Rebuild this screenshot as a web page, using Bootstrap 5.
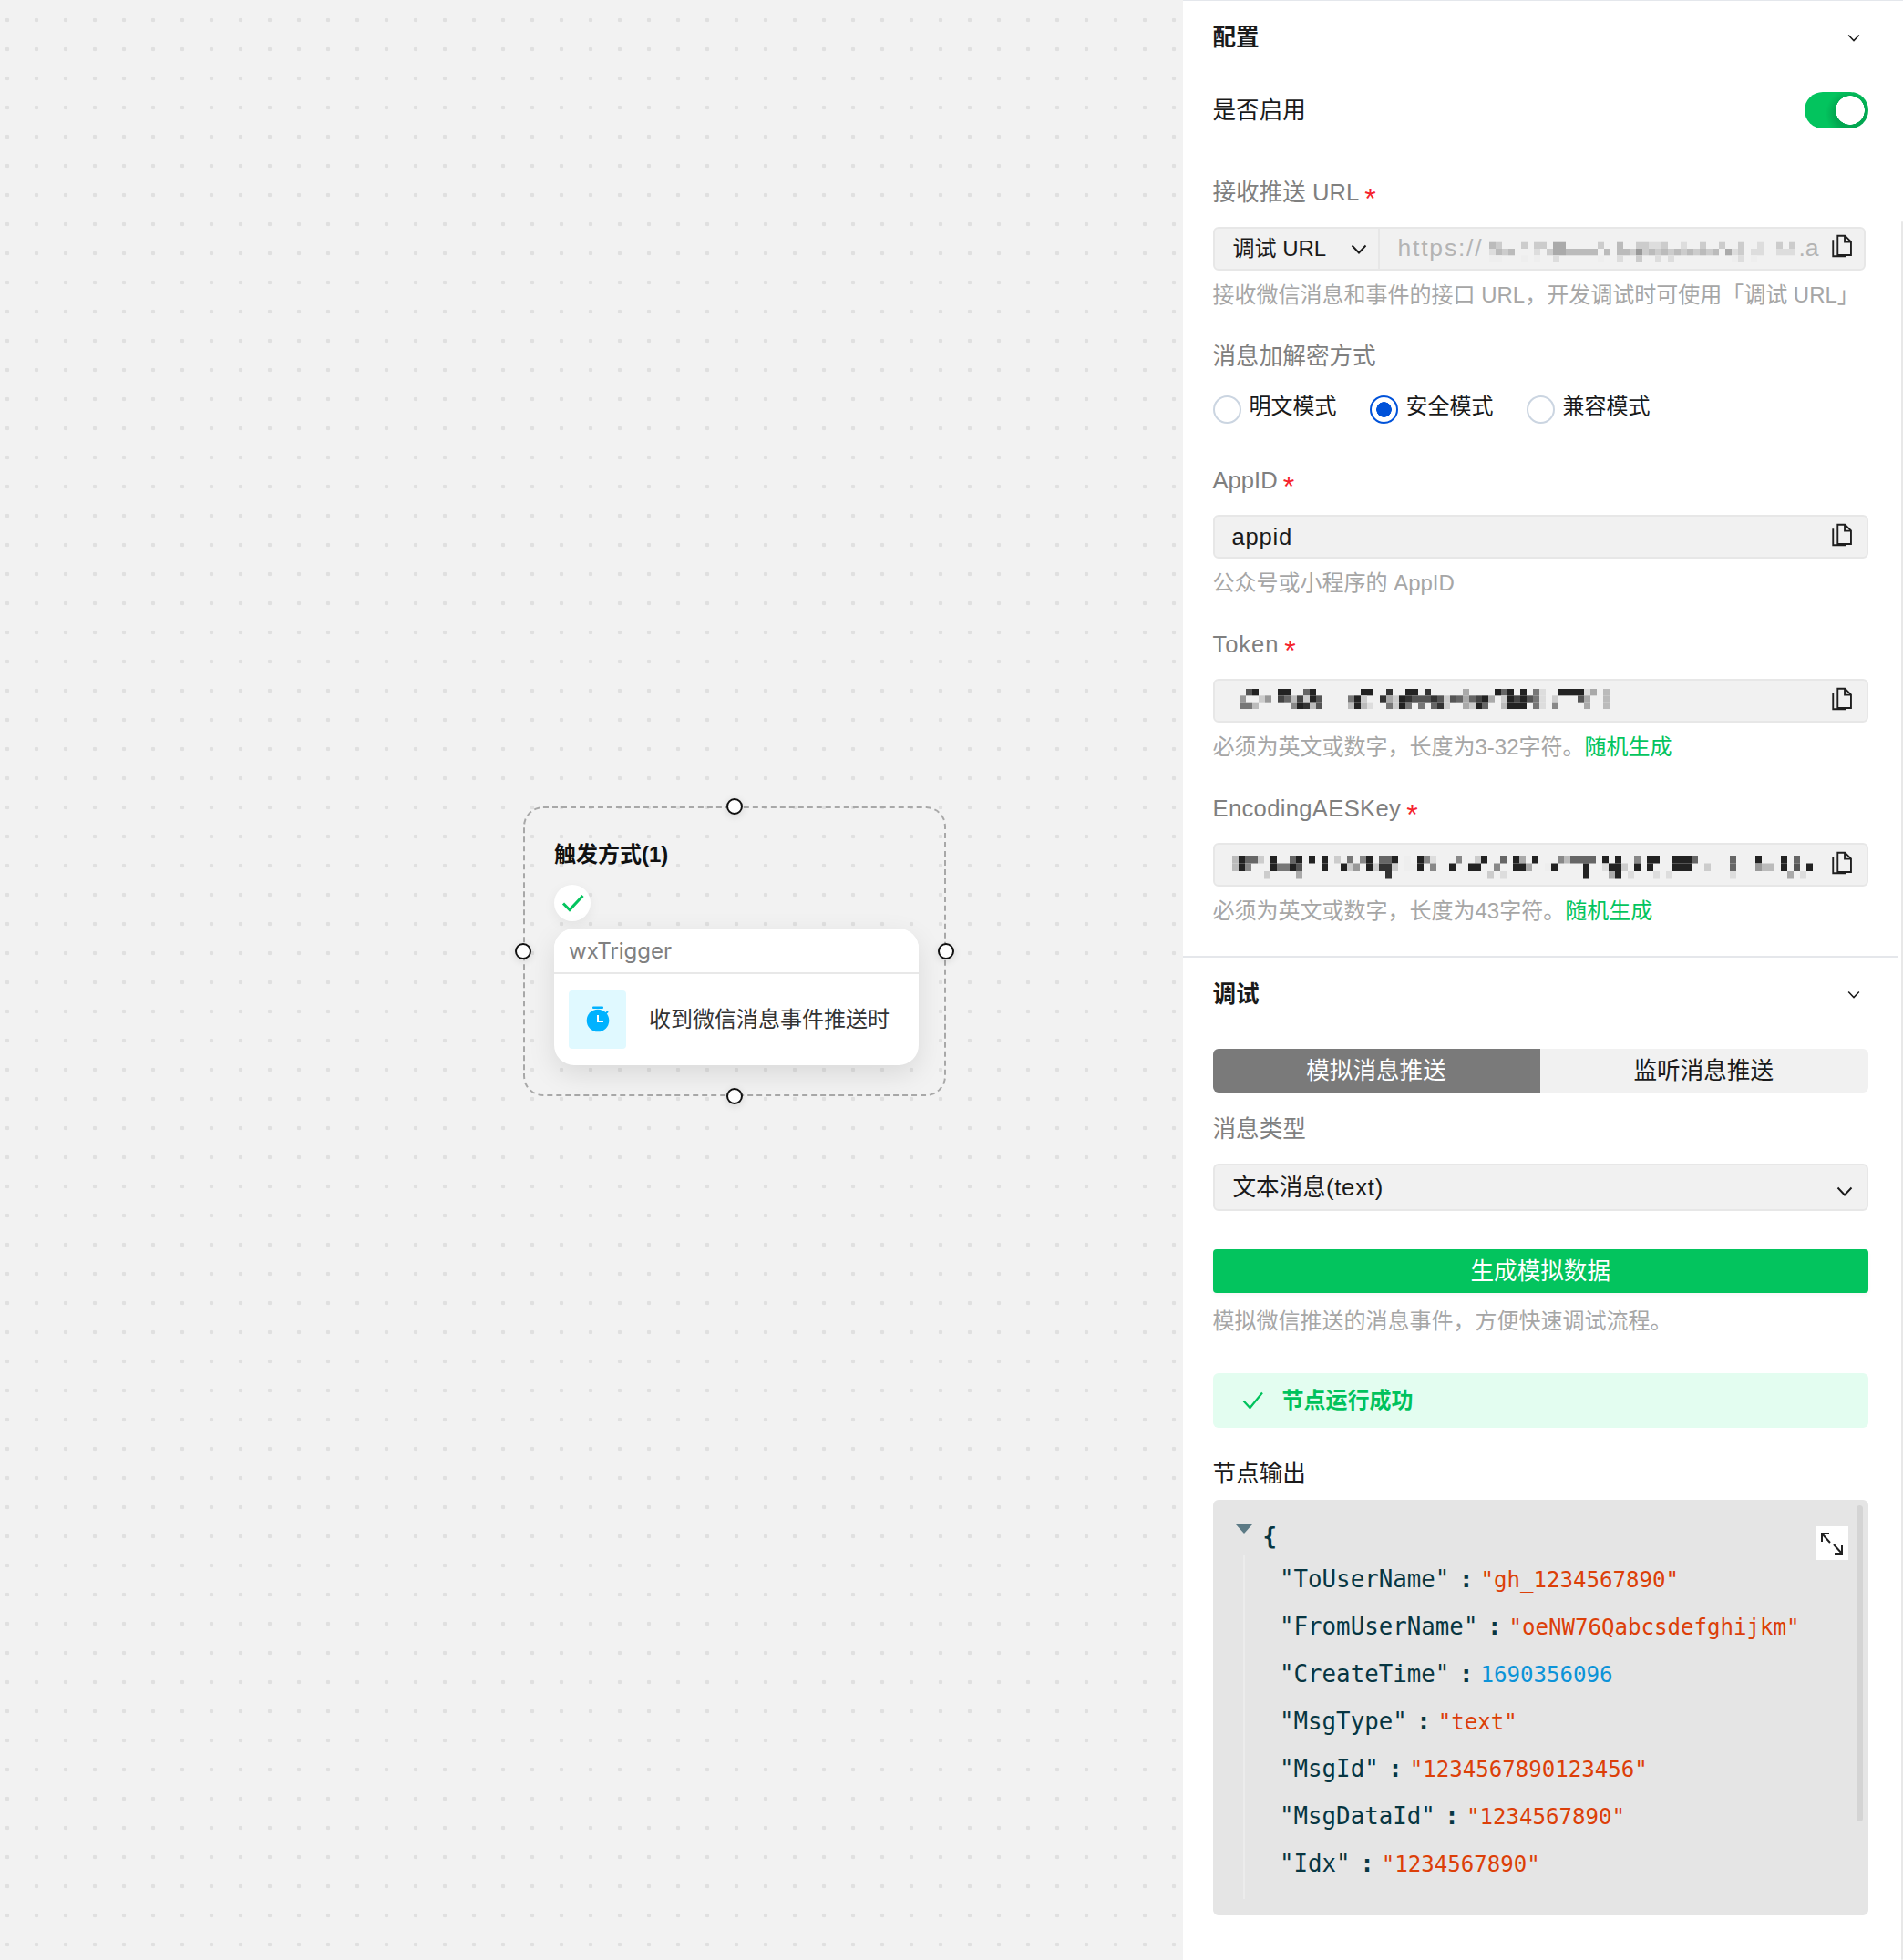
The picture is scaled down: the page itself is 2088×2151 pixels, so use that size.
<!doctype html>
<html lang="zh-CN">
<head>
<meta charset="utf-8">
<title>wxTrigger</title>
<link href="https://cdn.jsdelivr.net/npm/bootstrap@5.3.0/dist/css/bootstrap.min.css" rel="stylesheet">
<style>
html,body{margin:0;height:2151px;overflow:hidden}
body{font-family:"Liberation Sans","Noto Sans CJK SC",sans-serif;font-size:25.6px;color:#1a1a1a;background:#fff}
.stage{width:2088px;height:2151px}
.canvas-area{position:relative;width:1298px;height:2151px;flex:none;background-color:#f2f2f2;background-image:radial-gradient(circle at center,#e0e0e0 2px,transparent 2.6px);background-size:32px 32px;background-position:-8px 6px}
.node-box{position:absolute;left:574px;top:885px;width:464px;height:318px;border:2px dashed #a8a8a8;border-radius:22px;padding:36px 0 0 32px}
.node-title{font-size:24px;line-height:30px;font-weight:700;color:#111}
.node-check{width:40px;height:40px;margin-top:18px;border-radius:50%;background:#fff;box-shadow:0 4px 14px rgba(0,0,0,.06)}
.node-card{width:400px;height:150px;margin-top:8px;border:0;border-radius:22px;box-shadow:0 10px 30px rgba(0,0,0,.1)}
.node-card .card-header{height:50px;padding:0 16px;background:#fff;border-bottom:2px solid #e8e8e8;border-radius:22px 22px 0 0;font-family:Inter,"Noto Sans CJK SC",sans-serif;font-size:24px;line-height:49px;color:#808080}
.node-card .card-body{padding:18px 16px}
.node-icon{width:63px;height:64px;border-radius:4px;background:#e0f9ff}
.node-text{margin-left:25px;font-size:24px;color:#333;line-height:60px}
.handle{position:absolute;width:18px;height:18px;background:#fff;border:2.5px solid #111;border-radius:50%;box-shadow:0 2px 8px rgba(0,0,0,.12)}
.h-top{left:221px;top:-11px}.h-bot{left:221px;top:307px}.h-left{left:-11px;top:148px}.h-right{left:453px;top:148px}
.side{position:relative;width:790px;height:2151px;flex:none;background:#fff;border-top:1px solid #e4e7ec}
.side-sec{padding:0 38px 0 32.5px}
.side-rule{height:2px;margin:31px 6px 0 0;background:#e5e7eb}
.side-bar{position:absolute;right:0;top:242px;width:2px;bottom:0;background:#e8e8e8;border-radius:2px}
.sec-head{height:80px;padding-right:9px;font-weight:700;color:#1a1a1a}
.toggle-row{height:40px;margin-top:20px}
.form-switch{padding:0;min-height:0;margin:0}
.form-switch .toggle-input{width:70px;height:40px;margin:0;float:none;border:0;border-radius:20px;background-color:#03c45e;background-position:0 0;background-size:auto;background-image:radial-gradient(circle 16px at 50px 20px,#fff 15.5px,transparent 16px),radial-gradient(circle 27px at 50px 24px,rgba(0,110,55,.35) 16px,transparent 27px)}
.fld-label{margin-top:31px;line-height:36px;color:#7f7f7f}
.fld-label.first{margin-top:52px}
.fld-label.far{margin-top:44px}
.fld-label.type-label{margin-top:22px}
.fld-label.dark{color:#1a1a1a}
.star{display:inline-block;margin-left:6px;font-size:32px;line-height:0;color:#f5222d;vertical-align:-9px}
.ls-token{letter-spacing:.9px}
.ls-aes{letter-spacing:.33px}
.ls-val{letter-spacing:.8px}
.fld-box{position:relative;height:48px;margin-top:20px;background:#f1f1f1;border:2px solid #e7e7e7;border-radius:6px;color:#1a1a1a;font-size:25.6px}
.fld-box.form-control{padding:0 16px 0 19px;line-height:44px}
.fld-box.short{width:716px}
.fld-box .copy-ic{flex:none;margin:-4px 0 0 auto}
.fld-box .url-val .copy-ic{margin:-6px 0 0 0}
.url-sel{width:181px;height:44px;flex:none;padding:0 12px 0 20px;border-right:2px solid #e7e7e7;font-size:24px}
.url-val{padding:0 13px 0 20px;color:#b4b4b4;font-size:26.500px;min-width:0;flex:1}
.url-https{letter-spacing:1.8px;white-space:nowrap}
.url-end{margin:0 14px 0 0}
.mos{display:block;flex:none;filter:blur(.45px)}
.mos-url{margin-left:auto;margin-right:1px}
.mos-tok{margin-left:27.500px}
.mos-aes{margin-left:19.500px}
.fld-help{margin-top:9px;line-height:36px;font-size:24px;color:#a6a6a6;white-space:nowrap}
.fld-help.near{margin-top:13px}
.fld-help a{color:#03c45e;text-decoration:none}
.radio-row{height:31px;margin-top:25px}
.form-check.radio-item{display:flex;align-items:center;min-height:0;padding:0;margin:0}
.form-check-input.radio-dot{width:31px;height:31px;flex:none;margin:0;float:none;border:2px solid #cbd5e1;background-color:#fff}
.form-check-input.radio-dot:checked{border-color:#0052d9;background-color:#fff;background-image:radial-gradient(circle at center,#0052d9 8px,transparent 8.6px)}
.radio-text{margin:-7px 0 0 9px;font-size:24px;color:#1a1a1a}
.radio-item.ri-a{width:172px}
.radio-item.ri-b{width:172px}
.tab-set{width:719.500px;height:48px;margin-top:20px}
.tab-set .btn{flex:1 1 50%;padding:0;font-size:25.6px;line-height:48px;border:0;background:#f1f1f1;color:#1a1a1a;border-radius:6px}
.tab-set .btn.active{flex-basis:359px;flex-grow:0;background:#7a7a7a;color:#fff}
.pick-box{height:52px;margin-top:20px;padding:0 15px 0 20px;background:#f1f1f1;border:2px solid #e7e7e7;border-radius:6px;color:#1a1a1a}
.pick-box svg{margin-top:8px}
.gen-btn.btn{display:block;width:100%;height:48px;margin-top:42px;padding:0;font-size:25.6px;line-height:48px;color:#fff;background:#03c45e;border:0;border-radius:4px;box-shadow:0 2px 4px rgba(0,0,0,.04)}
.ok-note.alert{height:60px;margin:39px 0 0;padding:0 0 0 32px;background:#e3fdf0;border:0;border-radius:6px;font-size:24px;font-weight:700;color:#00c25c}
.ok-note svg{margin-right:20px}
.out-label{margin-top:32px}
.json-box{position:relative;height:456px;margin-top:11px;padding-top:16px;background:#e5e5e5;border-radius:6px;font-family:"DejaVu Sans Mono",monospace;font-size:25.8px;color:#073642;overflow:hidden}
.json-open{height:45px;padding-left:25px}
.json-open .tri{width:0;height:0;margin-top:-13px;border-left:9.5px solid transparent;border-right:9.5px solid transparent;border-top:10px solid #5c7a85}
.json-open b{margin:3px 0 0 12px;font-weight:700}
.json-list{margin-left:33px;padding:0 0 13px 38.500px;border-left:2px solid #ececec}
.json-row{height:52px;line-height:52px;white-space:pre}
.j-c{margin:0 8px 0 10.500px;font-weight:700}
.j-s{color:#dc3f08;font-size:24.100px}
.j-n{color:#0c93d8;font-size:24.100px}
.json-zoom{position:absolute;left:661px;top:29px;width:36px;height:37px;padding:0;background:#fff;border:0}
.json-thumb{position:absolute;right:6px;top:6px;width:7.5px;height:347px;border-radius:4px;background:#d4d4d4}
</style>
</head>
<body>
<svg width="0" height="0" class="position-absolute">
<symbol id="chev" viewBox="0 0 18 11"><path d="M1.500 1.500 9 9.500l7.500-8" fill="none" stroke="#1a1a1a" stroke-width="1.900"/></symbol>
<symbol id="copy" viewBox="0 0 21 24"><path d="M6 1.200h7.600L20 7.600v14H6z M13.400 1.200v6.600H20 M1.200 5.500v17.300h13.600" fill="none" stroke="#1f1f1f" stroke-width="1.800"/></symbol>
</svg>
<div class="stage d-flex">
  <div class="canvas-area">
    <div class="node-box">
      <span class="handle h-top"></span><span class="handle h-bot"></span><span class="handle h-left"></span><span class="handle h-right"></span>
      <div class="node-title">触发方式(1)</div>
      <div class="node-check d-flex align-items-center justify-content-center">
        <svg width="25" height="20" viewBox="0 0 25 20"><path d="M2 10.500l7 7L23.500 2" fill="none" stroke="#03c45e" stroke-width="3"/></svg>
      </div>
      <div class="card node-card">
        <div class="card-header">wxTrigger</div>
        <div class="card-body d-flex align-items-center">
          <div class="node-icon d-flex align-items-center justify-content-center">
            <svg width="32" height="32" viewBox="0 0 32 32"><rect x="10" y="1.500" width="12" height="2.600" rx="1" fill="#00b2ff"/><path d="M24.500 9.500l2.500-2.500" stroke="#00b2ff" stroke-width="2"/><circle cx="16" cy="17" r="12.300" fill="#00b2ff"/><path d="M16 11v7h6" fill="none" stroke="#fff" stroke-width="2"/></svg>
          </div>
          <div class="node-text">收到微信消息事件推送时</div>
        </div>
      </div>
    </div>
  </div>
  <aside class="side">
    <span class="side-bar"></span>
    <div class="side-sec">
      <div class="sec-head d-flex align-items-center justify-content-between"><span>配置</span><svg width="14" height="9"><use href="#chev"/></svg></div>
      <div class="toggle-row d-flex align-items-center justify-content-between">
        <span>是否启用</span>
        <div class="form-check form-switch"><input class="form-check-input toggle-input" type="checkbox" role="switch" checked aria-label="是否启用"></div>
      </div>
      <div class="fld-label first">接收推送 URL<span class="star">*</span></div>
      <div class="fld-box short d-flex align-items-center">
        <div class="url-sel d-flex align-items-center justify-content-between"><span>调试 URL</span><svg width="18" height="11"><use href="#chev"/></svg></div>
        <div class="url-val d-flex align-items-center">
          <span class="url-https">https://</span>
          <svg class="mos mos-url" data-rows="url" width="338" height="44"></svg>
          <span class="url-end">.a</span>
          <svg class="copy-ic" width="22" height="26"><use href="#copy"/></svg>
        </div>
      </div>
      <div class="fld-help">接收微信消息和事件的接口 URL，开发调试时可使用「调试 URL」</div>
      <div class="fld-label">消息加解密方式</div>
      <div class="radio-row d-flex">
        <div class="form-check radio-item ri-a"><input class="form-check-input radio-dot" type="radio" name="enc" aria-label="明文模式"><span class="radio-text">明文模式</span></div>
        <div class="form-check radio-item ri-b"><input class="form-check-input radio-dot" type="radio" name="enc" checked aria-label="安全模式"><span class="radio-text">安全模式</span></div>
        <div class="form-check radio-item"><input class="form-check-input radio-dot" type="radio" name="enc" aria-label="兼容模式"><span class="radio-text">兼容模式</span></div>
      </div>
      <div class="fld-label far">AppID<span class="star">*</span></div>
      <div class="fld-box form-control d-flex align-items-center"><span class="ls-val">appid</span><svg class="copy-ic" width="22" height="26"><use href="#copy"/></svg></div>
      <div class="fld-help">公众号或小程序的 AppID</div>
      <div class="fld-label"><span class="ls-token">Token</span><span class="star">*</span></div>
      <div class="fld-box d-flex align-items-center pe-3">
        <svg class="mos mos-tok" data-rows="tok" width="412" height="44"></svg>
        <svg class="copy-ic" width="22" height="26"><use href="#copy"/></svg>
      </div>
      <div class="fld-help">必须为英文或数字，长度为3-32字符。<a href="#">随机生成</a></div>
      <div class="fld-label"><span class="ls-aes">EncodingAESKey</span><span class="star">*</span></div>
      <div class="fld-box d-flex align-items-center pe-3">
        <svg class="mos mos-aes" data-rows="aes" width="640" height="44"></svg>
        <svg class="copy-ic" width="22" height="26"><use href="#copy"/></svg>
      </div>
      <div class="fld-help">必须为英文或数字，长度为43字符。<a href="#">随机生成</a></div>
    </div>
    <div class="side-rule"></div>
    <div class="side-sec">
      <div class="sec-head d-flex align-items-center justify-content-between"><span>调试</span><svg width="14" height="9"><use href="#chev"/></svg></div>
      <div class="btn-group tab-set d-flex" role="group">
        <button type="button" class="btn active">模拟消息推送</button>
        <button type="button" class="btn">监听消息推送</button>
      </div>
      <div class="fld-label type-label">消息类型</div>
      <div class="pick-box d-flex align-items-center justify-content-between"><span>文本消息<span class="ls-val">(text)</span></span><svg width="18" height="11"><use href="#chev"/></svg></div>
      <button type="button" class="btn gen-btn">生成模拟数据</button>
      <div class="fld-help near">模拟微信推送的消息事件，方便快速调试流程。</div>
      <div class="alert ok-note d-flex align-items-center" role="alert">
        <svg width="24" height="20" viewBox="0 0 24 20"><path d="M1.500 10.500 8.500 18 22 1.500" fill="none" stroke="#00c25c" stroke-width="2.200"/></svg>
        <span>节点运行成功</span>
      </div>
      <div class="fld-label dark out-label">节点输出</div>
      <div class="json-box">
        <div class="json-open d-flex align-items-center"><span class="tri"></span><b>{</b></div>
        <div class="json-list">
          <div class="json-row"><span>"ToUserName"</span><span class="j-c">:</span><span class="j-s">"gh_1234567890"</span></div>
          <div class="json-row"><span>"FromUserName"</span><span class="j-c">:</span><span class="j-s">"oeNW76Qabcsdefghijkm"</span></div>
          <div class="json-row"><span>"CreateTime"</span><span class="j-c">:</span><span class="j-n">1690356096</span></div>
          <div class="json-row"><span>"MsgType"</span><span class="j-c">:</span><span class="j-s">"text"</span></div>
          <div class="json-row"><span>"MsgId"</span><span class="j-c">:</span><span class="j-s">"1234567890123456"</span></div>
          <div class="json-row"><span>"MsgDataId"</span><span class="j-c">:</span><span class="j-s">"1234567890"</span></div>
          <div class="json-row"><span>"Idx"</span><span class="j-c">:</span><span class="j-s">"1234567890"</span></div>
        </div>
        <button type="button" class="json-zoom" aria-label="expand"><svg width="36" height="37" viewBox="0 0 36 37" class="d-block"><path d="M7 17V8h8M7 8l9 10M29 21v9h-8M29 30l-9-10" fill="none" stroke="#222" stroke-width="2"/></svg></button>
        <span class="json-thumb"></span>
      </div>
    </div>
  </aside>
</div>
<script src="https://cdn.jsdelivr.net/npm/bootstrap@5.3.0/dist/js/bootstrap.bundle.min.js"></script>
<script>
var MOS={
 tok:{x:0,y:9,h:7.34,rows:[
  "1:5 2:2 6:2 7:2 10:6 11:2 19:2 20:2 23:3 26:2 27:2 29:3 35:a 40:2 41:6 42:2 44:2 46:7 47:d 50:2 51:2 52:2 53:2 54:d 55:a 57:b",
  "0:9 3:c 4:9 6:4 7:6 8:b 9:4 10:c 11:2 12:5 17:7 18:2 19:c 22:3 23:a 24:c 25:2 26:3 27:5 28:5 29:5 30:3 31:5 32:c 33:5 34:6 35:a 36:6 37:4 38:2 39:a 41:c 42:2 43:4 44:2 45:5 46:7 47:d 49:c 53:5 54:a 57:b",
  "0:7 1:7 2:b 8:8 9:2 10:3 11:b 12:5 17:b 18:2 19:b 20:d 23:7 24:c 25:2 26:7 28:7 30:6 31:3 32:c 35:a 36:c 37:2 38:6 41:b 42:2 43:2 44:2 46:7 47:d 49:8 54:a 57:b"]},
 aes:{x:0,y:12,h:8.5,rows:[
  "0:b 1:2 2:6 3:6 4:c 6:2 9:6 10:2 12:2 14:2 16:c 18:7 20:8 21:2 23:6 24:6 25:2 27:e 29:2 30:8 31:d 35:8 38:c 39:2 42:6 44:2 45:a 47:2 51:8 52:b 53:6 54:6 55:6 56:6 58:2 60:2 63:8 65:2 66:2 69:2 70:2 71:2 72:6 78:6 82:2 86:2 88:6",
  "0:b 1:2 2:8 6:2 7:7 8:7 9:2 10:5 14:2 17:2 18:c 19:9 21:2 22:c 23:3 24:3 25:c 27:e 28:e 29:2 31:8 34:2 37:2 38:2 41:8 44:2 45:2 46:a 49:e 50:2 55:2 58:d 59:2 60:2 61:c 63:2 65:2 69:2 70:2 71:2 74:c 78:6 82:9 83:b 84:b 86:2 88:5 90:2",
  "5:c 10:a 24:3 40:c 42:d 55:2 59:a 60:2 62:d 66:d 68:d 78:d 87:a 89:d"]},
 url:{x:0,y:14.7,h:7.3,rows:[
  "0:b 1:c 5:c 7:c 8:c 10:a 11:a 17:c 20:b 23:c 24:c 25:d 26:d 27:c 30:d 33:c 36:c 39:c 42:d 45:c 47:c",
  "0:d 1:b 2:c 3:b 7:d 9:c 10:a 11:a 12:b 13:b 14:b 15:b 16:b 18:b 20:b 21:b 22:c 23:9 24:c 25:b 26:c 27:b 28:c 29:b 30:c 31:b 32:c 33:b 34:c 35:b 37:a 38:d 39:c 41:d 42:d 45:d 46:d 47:d",
  "0:e 1:e 5:e 7:e 10:d 17:e 20:d 23:c 26:d 28:d 38:e 39:d 41:e"]}
};
document.querySelectorAll('svg.mos').forEach(function(s){
 var m=MOS[s.getAttribute('data-rows')],out='';
 m.rows.forEach(function(r,ri){
  r.split(' ').forEach(function(p){
   var a=p.split(':'),v=parseInt(a[1],16)*17;
   out+='<rect x="'+(m.x+a[0]*7)+'" y="'+(m.y+ri*m.h)+'" width="7" height="'+m.h+'" fill="rgb('+v+','+v+','+v+')"/>';
  });
 });
 s.innerHTML=out;
});
</script>
</body>
</html>
